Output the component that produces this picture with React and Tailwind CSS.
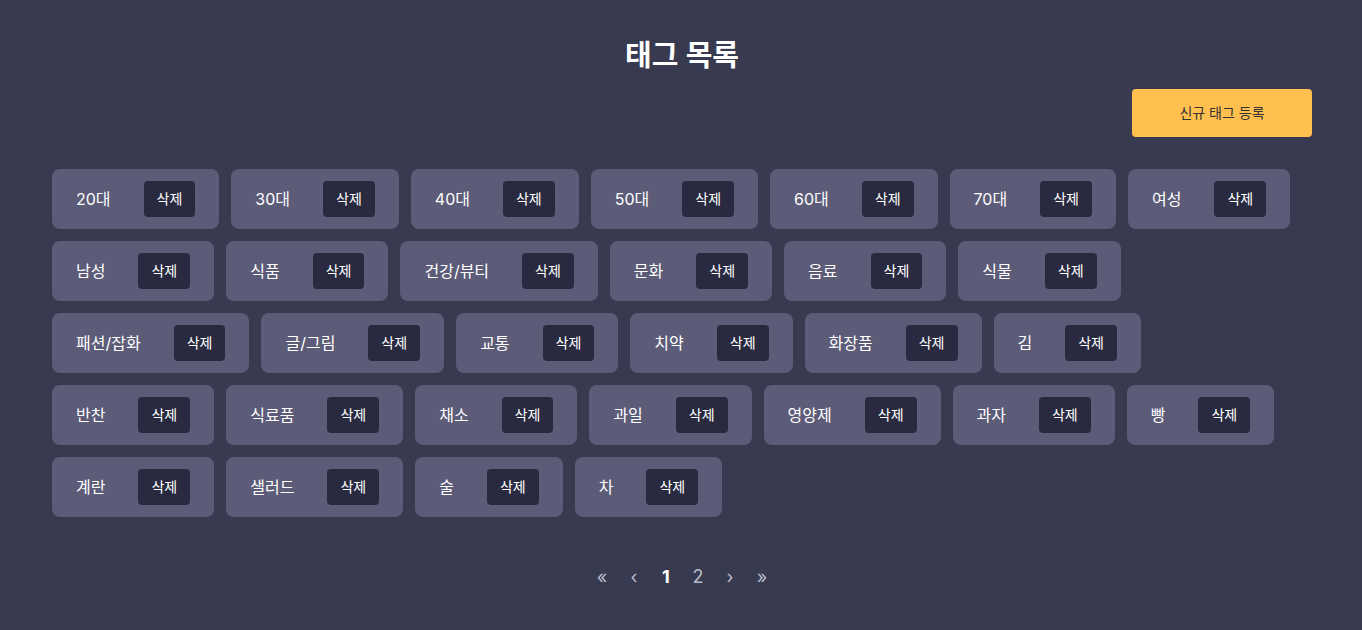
const tags = [
  '20대', '30대', '40대', '50대', '60대', '70대', '여성',
  '남성', '식품', '건강/뷰티', '문화', '음료', '식물',
  '패션/잡화', '글/그림', '교통', '치약', '화장품', '김',
  '반찬', '식료품', '채소', '과일', '영양제', '과자', '빵',
  '계란', '샐러드', '술', '차',
];

const rows = [7, 6, 6, 7, 4];

const TagChip = ({ name }) => (
  <div className="flex items-center gap-[33px] bg-[#5c5b78] rounded-lg px-6 py-3">
    <span className="text-base text-white">{name}</span>
    <button className="bg-[#292a40] text-white text-sm rounded px-[13px] py-2 leading-5">삭제</button>
  </div>
);

const App = () => {
  let start = 0;
  const grouped = rows.map((n) => {
    const row = tags.slice(start, start + n);
    start += n;
    return row;
  });

  return (
    <div
      className="min-h-screen bg-[#383a4f] pt-[36px] pl-[2px]"
      style={{ fontFamily: 'Inter, "Noto Sans CJK KR", sans-serif' }}
    >
      <div className="max-w-[1260px] mx-auto">
        {/* Header */}
        <h1 className="text-center text-[29px] leading-10 font-semibold text-white">태그 목록</h1>
        <div className="flex justify-end mt-[13px]">
          <button className="w-[180px] h-12 bg-[#ffc04f] text-[#333333] text-sm rounded">신규 태그 등록</button>
        </div>

        {/* Tag list */}
        <div className="flex flex-col gap-3 mt-8">
          {grouped.map((row, i) => (
            <div key={i} className="flex gap-3">
              {row.map((t) => (
                <TagChip key={t} name={t} />
              ))}
            </div>
          ))}
        </div>

        {/* Pagination */}
        <div className="flex justify-center items-center mt-[46px] text-lg text-[#b8bccc]">
          <span className="w-[32px] text-center">«</span>
          <span className="w-[32px] text-center">‹</span>
          <span className="w-[32px] text-center font-bold text-white">1</span>
          <span className="w-[32px] text-center">2</span>
          <span className="w-[32px] text-center">›</span>
          <span className="w-[32px] text-center">»</span>
        </div>
      </div>
    </div>
  );
};

export default App;
